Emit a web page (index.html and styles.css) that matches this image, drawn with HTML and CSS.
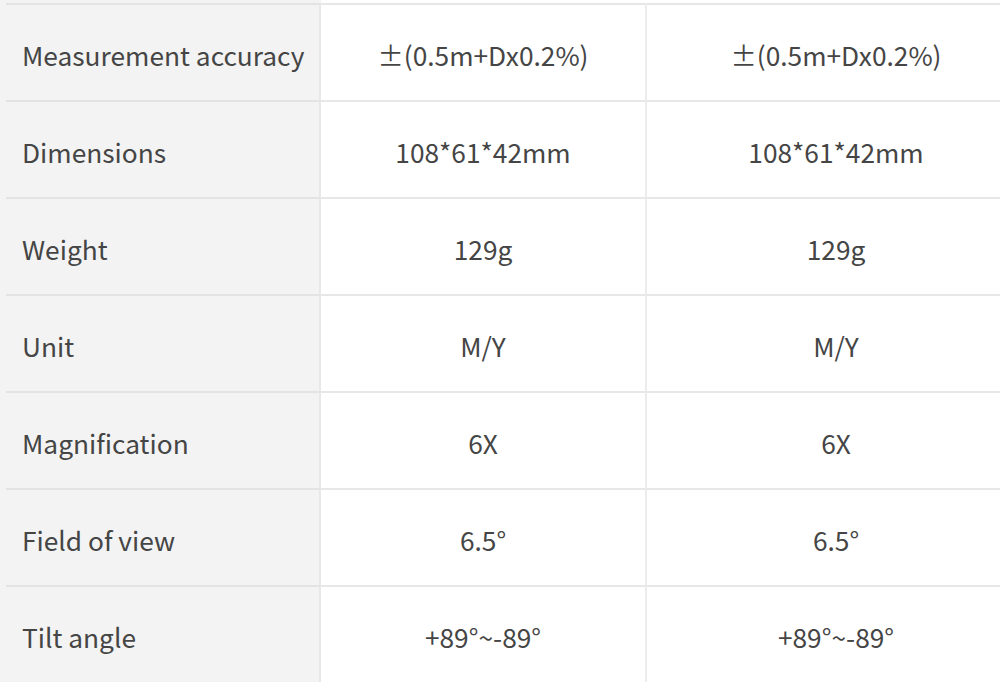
FILE: index.html
```html
<!DOCTYPE html>
<html>
<head>
<meta charset="utf-8">
<link rel="stylesheet" href="styles.css">
</head>
<body>
<div class="spec">
  <div class="row">
    <div class="label">Measurement accuracy</div>
    <div class="val">±(0.5m+Dx0.2%)</div>
    <div class="val last">±(0.5m+Dx0.2%)</div>
  </div>
  <div class="row">
    <div class="label">Dimensions</div>
    <div class="val">108*61*42mm</div>
    <div class="val last">108*61*42mm</div>
  </div>
  <div class="row">
    <div class="label">Weight</div>
    <div class="val">129g</div>
    <div class="val last">129g</div>
  </div>
  <div class="row">
    <div class="label">Unit</div>
    <div class="val">M/Y</div>
    <div class="val last">M/Y</div>
  </div>
  <div class="row">
    <div class="label">Magnification</div>
    <div class="val">6X</div>
    <div class="val last">6X</div>
  </div>
  <div class="row">
    <div class="label">Field of view</div>
    <div class="val">6.5°</div>
    <div class="val last">6.5°</div>
  </div>
  <div class="row">
    <div class="label">Tilt angle</div>
    <div class="val">+89°~-89°</div>
    <div class="val last">+89°~-89°</div>
  </div>
</div>
</body>
</html>
```
FILE: styles.css
```css
html, body {
  margin: 0;
  padding: 0;
  background: #ffffff;
  overflow: hidden;
  width: 1000px;
  height: 684px;
}
body {
  font-family: "Noto Sans CJK SC", "Source Sans Pro", sans-serif;
  color: #454545;
}
.spec {
  width: 1025px;
  background: linear-gradient(#f3f3f3, #f3f3f3) 0 0 / 321px 100% no-repeat;
  padding-top: 3px;
}
.row {
  display: grid;
  grid-template-columns: 321px 326px 378px;
  height: 97px;
}
.row > div {
  display: flex;
  align-items: center;
  font-size: 26.3px;
  box-sizing: border-box;
  padding-top: 3px;
  border-top: 2px solid #e7e7e7;
}
.label {
  padding-left: 22px;
  border-top-color: transparent !important;
  background: linear-gradient(#e3e3e3, #e3e3e3) 6px 0 / 100% 2px no-repeat, #f3f3f3;
  background-origin: border-box;
  border-right: 2px solid #e8e8e8;
}
.val {
  justify-content: center;
  border-right: 2px solid #ececec;
}
.val.last {
  border-right: none;
}
```
